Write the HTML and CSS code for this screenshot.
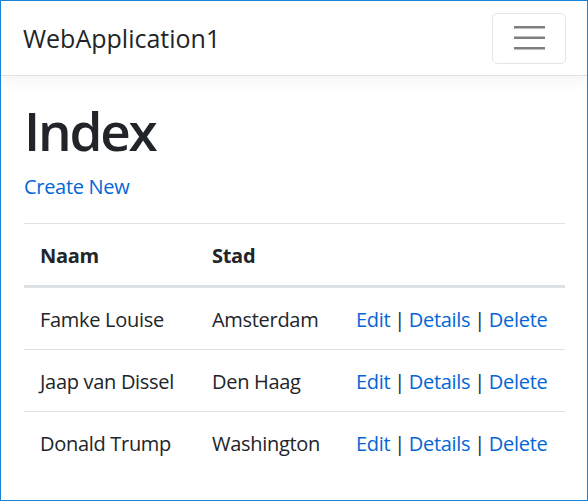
FILE: index.html
```html
<!DOCTYPE html>
<html lang="nl">
<head>
<meta charset="utf-8">
<title>Index - WebApplication1</title>
<link rel="stylesheet" href="styles.css">
</head>
<body>
<div class="frame">
  <header class="navbar">
    <a class="brand" href="#">WebApplication1</a>
    <button class="toggler" type="button" aria-label="Toggle navigation">
      <svg width="31" height="26" viewBox="0 0 31 26" aria-hidden="true">
        <path d="M0 2.25H31M0 12.75H31M0 23.25H31" stroke="rgba(0,0,0,0.5)" stroke-width="2.5" fill="none"/>
      </svg>
    </button>
  </header>
  <main class="container">
    <h1 class="title">Index</h1>
    <p class="create"><a href="#">Create New</a></p>
    <table class="table">
      <colgroup>
        <col class="col-name">
        <col class="col-city">
        <col class="col-actions">
      </colgroup>
      <thead>
        <tr><th>Naam</th><th>Stad</th><th></th></tr>
      </thead>
      <tbody>
        <tr><td>Famke Louise</td><td>Amsterdam</td><td class="actions"><a href="#">Edit</a> | <a href="#">Details</a> | <a href="#">Delete</a></td></tr>
        <tr><td>Jaap van Dissel</td><td>Den Haag</td><td class="actions"><a href="#">Edit</a> | <a href="#">Details</a> | <a href="#">Delete</a></td></tr>
        <tr><td>Donald Trump</td><td>Washington</td><td class="actions"><a href="#">Edit</a> | <a href="#">Details</a> | <a href="#">Delete</a></td></tr>
      </tbody>
    </table>
  </main>
</div>
</body>
</html>
```

FILE: styles.css
```css
* { box-sizing: border-box; }
html, body { margin: 0; padding: 0; background: #fff; }
body {
  font-family: "Open Sans", "Noto Sans", sans-serif;
  font-size: 20px;
  line-height: 30px;
  letter-spacing: -0.3px;
  color: #212529;
}
a { color: #0366d6; text-decoration: none; }

.frame {
  width: 588px;
  height: 501px;
  border: 1px solid #1883d7;
  overflow: hidden;
  background: #fff;
}

.navbar {
  height: 75px;
  padding: 0 21px 0 22px;
  display: flex;
  align-items: center;
  justify-content: space-between;
  border-bottom: 1px solid #e2e2e2;
  box-shadow: 0 5px 15px rgba(0,0,0,0.05);
  position: relative;
}
.brand {
  color: #212529;
  font-size: 25px;
  line-height: 30px;
  letter-spacing: 0;
}
.toggler {
  width: 74px;
  height: 51px;
  padding: 0;
  margin: 0;
  background: transparent;
  border: 1px solid rgba(0,0,0,0.1);
  border-radius: 5px;
  display: flex;
  align-items: center;
  justify-content: center;
}
.toggler svg { display: block; }

.container {
  padding: 0 22px 0 23px;
}
.title {
  margin: 22px 0 9px;
  font-size: 53px;
  line-height: 65px;
  font-weight: 600;
  letter-spacing: -2.2px;
}
.create {
  margin: 0 0 21px;
}

.table {
  width: 100%;
  table-layout: fixed;
  border-collapse: separate;
  border-spacing: 0;
}
.col-name { width: 172px; }
.col-city { width: 144px; }
.table th,
.table td {
  text-align: left;
  vertical-align: top;
  padding: 16px 8px 14px 16px;
  line-height: 31px;
  white-space: nowrap;
}
.table th {
  font-weight: 700;
  border-top: 1px solid #dee2e6;
  border-bottom: 3px solid #dee2e6;
}
.table td {
  border-bottom: 1px solid #dee2e6;
}
.table tbody tr:last-child td {
  border-bottom: none;
}
.table td.actions {
  letter-spacing: -0.3px;
  word-spacing: -1px;
}
```
